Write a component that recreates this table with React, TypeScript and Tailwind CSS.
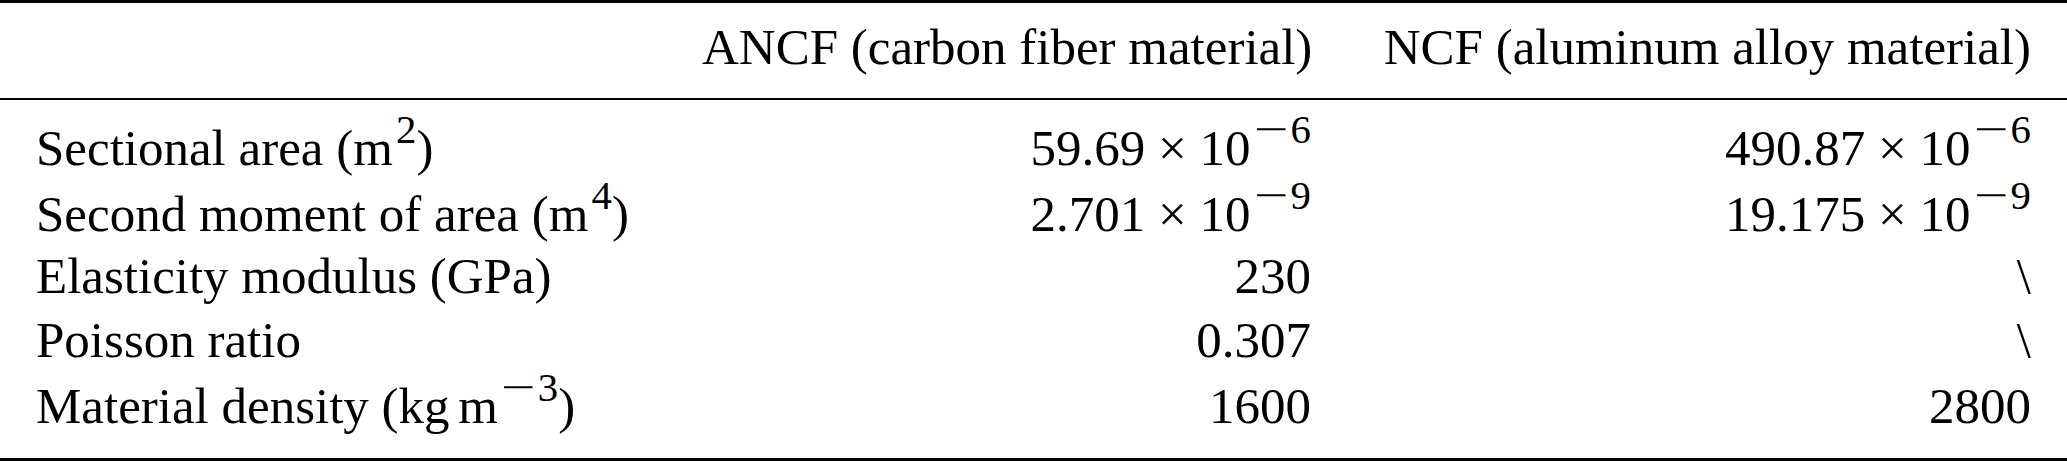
const SUP = "text-[0.8em] -top-[0.55em] ml-[0.08em]";

function Exp({ v }: { v: string }) {
  const neg = v.startsWith("−");
  return (
    <sup className={SUP}>
      {neg && (
        <span className="inline-block w-[0.9em] text-left">
          <span className="inline-block origin-left scale-x-[1.5]">−</span>
        </span>
      )}
      {neg ? v.slice(1) : v}
    </sup>
  );
}

function Sci({ base, exp }: { base: string; exp: string }) {
  return (
    <>
      {base} × 10
      <Exp v={exp} />
    </>
  );
}

const rows: { label: React.ReactNode; ancf: React.ReactNode; ncf: React.ReactNode; h: string }[] = [
  {
    label: (
      <>
        Sectional area (m<Exp v="2" />)
      </>
    ),
    ancf: <Sci base="59.69" exp="−6" />,
    ncf: <Sci base="490.87" exp="−6" />,
    h: "h-[66px]",
  },
  {
    label: (
      <>
        Second moment of area (m<Exp v="4" />)
      </>
    ),
    ancf: <Sci base="2.701" exp="−9" />,
    ncf: <Sci base="19.175" exp="−9" />,
    h: "h-[62px]",
  },
  { label: "Elasticity modulus (GPa)", ancf: "230", ncf: "\\", h: "h-[64px]" },
  { label: "Poisson ratio", ancf: "0.307", ncf: "\\", h: "h-[66px]" },
  {
    label: (
      <>
        Material density (kg<span className="ml-[0.17em]">m</span>
        <Exp v="−3" />)
      </>
    ),
    ancf: "1600",
    ncf: "2800",
    h: "h-[64px]",
  },
];

export default function App() {
  return (
    <div className="w-[2067px] h-[461px] bg-white text-black font-['Liberation_Serif',serif] text-[51px] leading-[64px]">
      <div className="border-t-[3px] border-b-[3px] border-black">
        {/* Header */}
        <div className="grid grid-cols-[666px_681px_720px] border-b-2 border-black pt-[12px] pb-[19px]">
          <div className="px-[36px] h-[64px]" />
          <div className="px-[36px] h-[64px] text-right whitespace-nowrap">ANCF (carbon fiber material)</div>
          <div className="px-[36px] h-[64px] text-right whitespace-nowrap">NCF (aluminum alloy material)</div>
        </div>

        {/* Body */}
        <div className="grid grid-cols-[666px_681px_720px] pt-[16px] pb-[20px]">
          {rows.map((r, i) => (
            <div key={i} className="contents">
              <div className={`px-[36px] whitespace-nowrap ${r.h}`}>{r.label}</div>
              <div className={`px-[36px] whitespace-nowrap text-right ${r.h}`}>{r.ancf}</div>
              <div className={`px-[36px] whitespace-nowrap text-right ${r.h}`}>{r.ncf}</div>
            </div>
          ))}
        </div>
      </div>
    </div>
  );
}
